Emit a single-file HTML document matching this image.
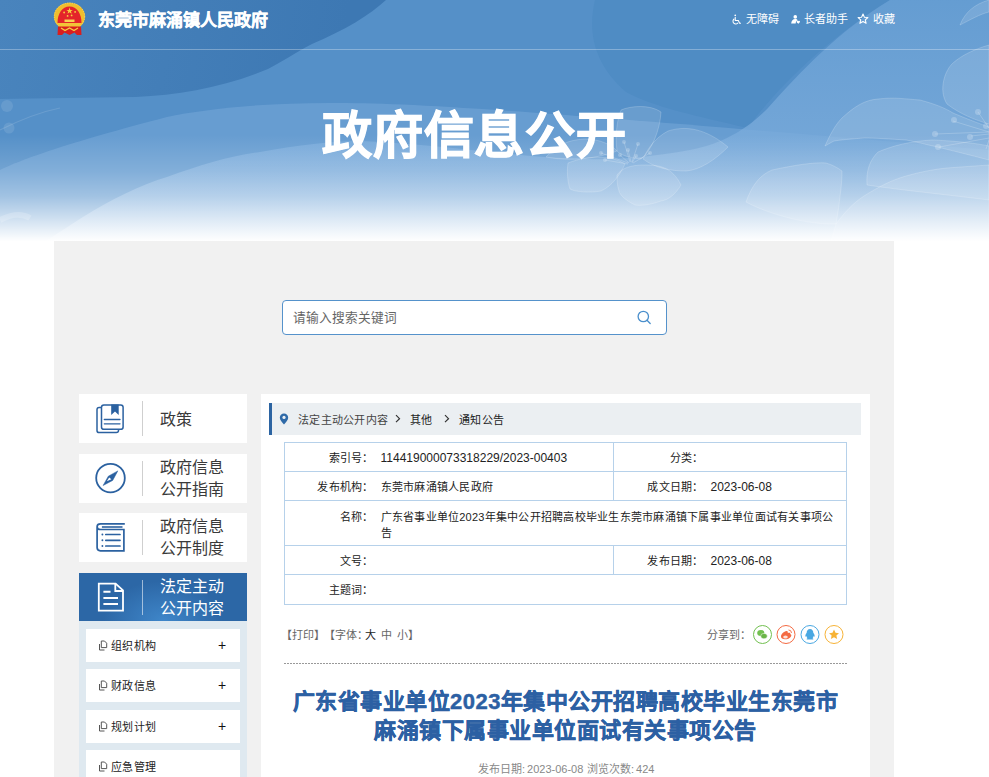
<!DOCTYPE html>
<html lang="zh-CN"><head><meta charset="utf-8">
<style>
*{margin:0;padding:0;box-sizing:border-box}
html,body{width:989px;height:777px;overflow:hidden;background:#fff;font-family:"Liberation Sans",sans-serif}
.abs{position:absolute}
#hdr{position:absolute;left:0;top:0;width:989px;height:245px;overflow:hidden;
 background:linear-gradient(to bottom,#4a84be 0px,#4c87c0 90px,#6c9fd2 140px,#a9c8e7 180px,#e6eff9 220px,#ffffff 243px)}
#topline{position:absolute;left:0;top:49px;width:989px;height:1px;background:rgba(255,255,255,0.28)}
.sitename{position:absolute;left:98px;top:10px;font-size:17px;font-weight:bold;color:#fff;-webkit-text-stroke:0.35px #fff;line-height:22px;white-space:nowrap}
.toplinks{position:absolute;top:11px;font-size:11px;color:#fff;line-height:16px;white-space:nowrap}
.bigtitle{position:absolute;left:0;width:948px;top:101px;text-align:center;font-size:50px;letter-spacing:0.7px;text-indent:0.7px;font-weight:bold;color:#fff;-webkit-text-stroke:1.1px #fff;line-height:70px;white-space:nowrap}
#main{position:absolute;left:54px;top:241px;width:840px;height:600px;background:#f1f1f1}
#search{position:absolute;left:282px;top:300px;width:385px;height:35px;background:#fff;border:1px solid #5592cb;border-radius:4px}
#search span{position:absolute;left:10px;top:8px;font-size:12.7px;color:#666;line-height:18px}
.side{position:absolute;left:79px;width:168px;height:49px;background:#fff}
.side .div{position:absolute;left:63px;top:7px;width:1px;height:35px;background:#cfcfcf}
.side .t{position:absolute;left:81px;font-size:16px;color:#3a3a3a;line-height:22px;white-space:nowrap}
.side svg{position:absolute;left:16px;top:9px}
#active{background:radial-gradient(ellipse 60px 40px at 50% 100%,#3f86c9 0%,#2c67a6 100%)}
#active .t{color:#fff}
#active .div{background:rgba(255,255,255,0.55)}
#sub{position:absolute;left:79px;top:621px;width:168px;height:200px;background:#dfe9f0}
.si{position:absolute;left:7px;width:154px;height:33px;background:#fff}
.si .t{position:absolute;left:25px;top:9px;font-size:11px;letter-spacing:0.4px;color:#222;line-height:16px;white-space:nowrap}
.si .p{position:absolute;left:132px;top:6px;font-size:14px;color:#111;line-height:20px}
.si svg{position:absolute;left:13px;top:11px}
#panel{position:absolute;left:261px;top:394px;width:609px;height:400px;background:#fff}
#crumb{position:absolute;left:269px;top:403px;width:592px;height:32px;background:#ebeff2;border-left:3px solid #2c64a2;font-size:12px;color:#333;line-height:32px;white-space:nowrap}
table{position:absolute;left:284px;top:442px;border-collapse:collapse;font-size:12px;color:#222}
td{border-top:1px solid #b6d1ea;border-bottom:1px solid #b6d1ea;padding:0;line-height:16px;font-size:11px;letter-spacing:0.25px}
.n{font-size:12px;letter-spacing:0}
td.l{border-left:1px solid #b6d1ea}
td.e{border-right:1px solid #b6d1ea}
td.l{text-align:right;padding-right:0;padding-top:1px}
td.v{padding-left:7px;padding-top:1px}
.tools{position:absolute;top:627px;font-size:11px;color:#666;line-height:16px;white-space:nowrap}
#dots{position:absolute;left:284px;top:663px;width:563px;height:1px;background:repeating-linear-gradient(to right,#999 0,#999 2px,transparent 2px,transparent 3px)}
.atitle{position:absolute;left:284px;width:563px;top:687px;text-align:center;font-size:22px;letter-spacing:0.5px;font-weight:bold;color:#2c60a3;-webkit-text-stroke:0.45px #2c60a3;line-height:29px}
.meta{position:absolute;left:284px;width:563px;top:761px;text-align:center;font-size:11px;color:#888;line-height:16px;white-space:nowrap}
</style></head><body>
<div id="hdr">
<svg width="989" height="245" viewBox="0 0 989 245" style="position:absolute;left:0;top:0">
<defs>
<linearGradient id="fade" x1="0" y1="0" x2="0" y2="245" gradientUnits="userSpaceOnUse">
<stop offset="0" stop-color="#fff" stop-opacity="0"/>
<stop offset="0.55" stop-color="#fff" stop-opacity="0"/>
<stop offset="0.70" stop-color="#fff" stop-opacity="0.18"/>
<stop offset="0.80" stop-color="#fff" stop-opacity="0.38"/>
<stop offset="0.88" stop-color="#fff" stop-opacity="0.64"/>
<stop offset="0.95" stop-color="#fff" stop-opacity="0.88"/>
<stop offset="0.985" stop-color="#fff" stop-opacity="1"/>
</linearGradient>
<linearGradient id="lt" x1="0" y1="0" x2="0" y2="245" gradientUnits="userSpaceOnUse">
<stop offset="0" stop-color="#6aa1d5"/>
<stop offset="0.6" stop-color="#7eaedd"/>
<stop offset="1" stop-color="#a8c8e8"/>
</linearGradient>
<linearGradient id="dk" x1="0" y1="0" x2="340" y2="60" gradientUnits="userSpaceOnUse">
<stop offset="0" stop-color="#4984bd"/>
<stop offset="1" stop-color="#3d78b3"/>
</linearGradient>
</defs>
<rect x="0" y="0" width="989" height="245" fill="#5590c8"/>
<path d="M0,0 H386 C370,15 345,30 312,44 C295,53 283,61 268,69 C225,87 180,95 136,97 L0,99 Z" fill="url(#dk)"/>
<path d="M595,0 C588,30 592,62 626,92 C650,106 700,117 748,128 C775,90 825,40 890,0 Z" fill="#4f8cc4"/>
<path d="M0,170 C20,160 67,143 167,117 C210,108 267,103 330,103 C420,103 520,110 989,150 V245 H0 Z" fill="#6da1d4" opacity="0.75"/>
<path d="M40,245 C60,232 70,225 83,217 C110,200 140,185 167,177 C200,165 230,156 260,152 C300,145 330,141 360,141 C450,145 520,158 586,159 C620,160 650,157 690,150 C725,143 748,128 768,108 C800,72 840,30 890,0 H989 V245 Z" fill="url(#lt)" opacity="0.75"/>
<g fill="#fff" fill-opacity="0.12" stroke="#fff" stroke-opacity="0.18" stroke-width="1">
<path d="M546,157 C555,147 565,140 585,139 C600,139 612,145 617,151 C600,158 570,162 546,157 Z"/>
<path d="M621,110 C630,106 650,104 661,112 C660,130 652,150 641,159 C630,158 620,155 617,151 C615,135 617,120 621,110 Z"/>
<path d="M643,159 C648,148 655,138 668,131 C690,124 710,132 728,147 C715,160 700,170 686,171 C670,171 655,168 643,159 Z"/>
<path d="M568,163 C580,158 595,156 610,158 C618,160 622,162 625,164 C620,175 612,186 601,191 C590,193 575,192 570,189 C567,180 567,170 568,163 Z"/>
<path d="M617,175 C622,168 630,165 645,165 C660,165 672,167 681,185 C675,195 668,200 661,201 C650,205 640,206 635,205 C625,200 620,195 619,191 C617,185 617,180 617,175 Z"/>
<path d="M960,25 C965,12 975,4 989,0 V12 C980,14 970,20 960,25 Z"/>
<path d="M947,104 C938,90 945,70 953,63 C962,55 975,49 989,45 V124 C975,120 960,114 947,104 Z"/>
<path d="M867,185 C866,170 870,160 878,152 C892,146 910,141 933,140 C955,141 975,143 989,146 V200 C950,195 900,190 867,185 Z"/>
<path d="M825,146 C830,135 835,125 842,118 C855,106 865,100 878,99 C895,97 905,99 920,100 C935,104 945,108 953,113 C965,118 975,122 989,127 V160 C970,155 950,150 933,146 C920,143 912,141 906,140 C890,139 875,138 864,138 C850,139 840,140 834,141 C830,143 827,145 825,146 Z"/>
<path d="M836,224 C845,212 852,204 864,196 C880,186 892,180 906,176 C920,172 935,169 947,168 C960,167 975,166 989,165 V245 H830 Z"/>
<path d="M746,202 C752,185 760,175 772,170 C795,165 815,162 826,163 C833,165 838,168 842,171 C842,185 840,195 839,205 C838,212 837,218 836,224 C810,225 770,215 746,202 Z"/>
</g>
<g fill="#fff" fill-opacity="0.22">
<circle cx="624" cy="142" r="2"/><circle cx="638" cy="144" r="2"/><circle cx="628" cy="150" r="2"/><circle cx="601" cy="153" r="2"/><circle cx="605" cy="160" r="2"/><circle cx="620" cy="155" r="2"/><circle cx="636" cy="156" r="2"/><circle cx="650" cy="153" r="2"/>
<circle cx="935" cy="134" r="3"/><circle cx="938" cy="147" r="3"/><circle cx="954" cy="120" r="3"/><circle cx="970" cy="137" r="3"/><circle cx="978" cy="112" r="3"/><circle cx="986" cy="126" r="3"/>
</g>
<g fill="#fff" fill-opacity="0.1"><circle cx="7" cy="106" r="6"/><circle cx="9" cy="128" r="5.5"/></g>
<path d="M0,130 C20,120 40,112 60,108" fill="none" stroke="#fff" stroke-opacity="0.12" stroke-width="1.2"/>
<path d="M0,220 C10,215 20,212 30,218" fill="none" stroke="#fff" stroke-opacity="0.2" stroke-width="6"/>
<g stroke="#fff" stroke-opacity="0.2" stroke-width="1" fill="none">
<path d="M935,134 L989,132 M939,147 L989,138 M953,121 L989,132 M971,136 L989,134 M978,112 L989,128 M986,149 L989,140"/>
<path d="M624,142 L630,162 M638,144 L632,162 M628,150 L631,162 M601,153 L628,163 M605,160 L628,164 M620,155 L629,163 M636,156 L632,163 M650,153 L633,163"/>
</g>
<rect x="0" y="0" width="989" height="245" fill="url(#fade)"/>
<rect x="0" y="49" width="989" height="1" fill="#fff" fill-opacity="0.3"/>
</svg>
</div>
<svg class="abs" style="left:50px;top:0px" width="40" height="40" viewBox="0 0 40 40">
<ellipse cx="19.5" cy="16.5" rx="15.5" ry="13.8" fill="#f0be2e"/>
<ellipse cx="19.5" cy="16.5" rx="15.2" ry="13.5" fill="none" stroke="#f8d860" stroke-width="1" stroke-dasharray="1.2 1.2"/>
<path d="M7.5,23 C7.5,14 12,6.6 19.5,6.6 C27,6.6 31.5,14 31.5,23 Z" fill="#e4242a"/>
<path d="M19.5,7.6 l0.9,2.3 h2.4 l-1.9,1.4 0.8,2.4 -2.2,-1.5 -2,1.5 0.8,-2.4 -1.9,-1.4 h2.4 z" fill="#f6d040"/>
<circle cx="14.1" cy="12.5" r="0.9" fill="#f6d040"/><circle cx="17.6" cy="15.9" r="0.9" fill="#f6d040"/><circle cx="21.6" cy="15.4" r="0.9" fill="#f6d040"/><circle cx="25.1" cy="11.9" r="0.9" fill="#f6d040"/>
<rect x="14.5" y="19.5" width="10" height="2.5" fill="#f8d050"/>
<path d="M7.5,23 H31.5 L30,26.5 H9 Z" fill="#f2c438"/>
<path d="M8,26.5 H31 L31.5,35 H27 L24.5,32.5 L19.5,35 L14.5,32.5 L12,35 H7.5 Z" fill="#d91e1e"/>
<path d="M11,28 L15,30.5 L19.5,28 L24,30.5 L28,28" fill="none" stroke="#f6d040" stroke-width="1.4"/>
</svg>
<svg class="abs" style="left:732px;top:14px" width="10" height="10.5" viewBox="0 0 11 12" fill="none" stroke="#fff" stroke-width="1.2">
<circle cx="3.5" cy="1.5" r="1" fill="#fff" stroke="none"/>
<path d="M3.5,3.5 V7.5 H7 L8.5,10.5 H10"/>
<path d="M2.5,5.5 A3.2,3.2 0 1 0 6.8,10"/>
</svg><svg class="abs" style="left:790px;top:15px" width="10.5" height="9" viewBox="0 0 12 11" fill="#fff">
<circle cx="6" cy="2.3" r="2.2"/>
<path d="M1,10.5 C1.5,7 3,5 6,5 C7.5,5 8.5,5.5 9,6.5 L7,7.5 L6.5,10.5 Z"/>
<path d="M7.5,8 C8,6.8 9.2,6.8 9.8,7.6 C10.4,6.8 11.6,6.8 11.8,8 C11.9,9 10.5,10 9.8,10.7 C9,10 7.4,9 7.5,8 Z"/>
</svg><svg class="abs" style="left:857px;top:13px" width="12" height="12" viewBox="0 0 12 12" fill="none" stroke="#fff" stroke-width="1.1" stroke-linejoin="round">
<path d="M6,1 L7.4,4.2 L10.9,4.5 L8.3,6.8 L9.1,10.3 L6,8.5 L2.9,10.3 L3.7,6.8 L1.1,4.5 L4.6,4.2 Z"/>
</svg>
<div class="sitename">东莞市麻涌镇人民政府</div>
<div class="toplinks" style="left:746px">无障碍</div>
<div class="toplinks" style="left:804px">长者助手</div>
<div class="toplinks" style="left:873px">收藏</div>
<div class="bigtitle">政府信息公开</div>

<div id="main"></div>
<div id="search"><span>请输入搜索关键词</span></div>
<svg class="abs" style="left:635px;top:308px" width="18" height="18" viewBox="0 0 18 18" fill="none" stroke="#4a8fcc" stroke-width="1.3">
<circle cx="8.3" cy="8.5" r="5.2"/><path d="M12,12.3 L15.2,15.5" stroke-linecap="round"/>
</svg>

<div class="side" style="top:394px"><div class="div"></div><div class="t" style="top:15px">政策</div></div>
<div class="side" style="top:454px"><div class="div"></div><div class="t" style="top:3px">政府信息<br>公开指南</div></div>
<div class="side" style="top:513px"><div class="div"></div><div class="t" style="top:3px">政府信息<br>公开制度</div></div>
<div class="side" id="active" style="top:573px;height:48px"><div class="div"></div><div class="t" style="top:3px">法定主动<br>公开内容</div></div>
<svg class="abs" style="left:90px;top:400px" width="40" height="40" viewBox="0 0 40 40" fill="none" stroke="#2b61a0">
<path d="M11,7.4 H9.2 Q7,7.4 7,9.6 V30.4 Q7,32.6 9.2,32.6 H26.3 Q28.5,32.6 28.6,30" stroke-width="1.5"/>
<rect x="11.5" y="4.9" width="21.6" height="24.4" rx="2.4" stroke-width="1.5"/>
<path d="M21.2,4.6 H28.7 V15 L25,11.6 L21.2,15 Z" fill="#2b61a0" stroke="none"/>
<path d="M14.3,19.5 H30 M14.3,23.8 H30" stroke-width="1.3" stroke-linecap="round"/>
</svg><svg class="abs" style="left:90px;top:458px" width="40" height="40" viewBox="0 0 40 40" fill="none" stroke="#2b61a0">
<circle cx="20.5" cy="20.1" r="14.3" stroke-width="1.8"/>
<path d="M27.8,12.9 L22.7,22.4 L13.1,27.5 L18.3,18.2 Z" fill="#2b61a0" stroke="#2b61a0" stroke-width="0.5" stroke-linejoin="round"/>
<path d="M19.2,19.5 L21.4,21.3 L16.8,23.3 Z" fill="#fff" stroke="none"/>
</svg><svg class="abs" style="left:90px;top:517px" width="40" height="40" viewBox="0 0 40 40" fill="none" stroke="#2b61a0">
<path d="M34.8,6.8 H10.6 Q7.1,6.8 7.1,9.7 Q7.1,12.5 10.6,12.5 H33.9 V33.8 H10.4 Q7.1,33.8 7.1,30.6 V9.7" stroke-width="1.7"/>
<path d="M11.9,10 H32.5" stroke-width="1.6"/>
<path d="M15.8,17.5 H30 M15.8,23.3 H30 M15.8,29 H30" stroke-width="1.7" stroke-linecap="round"/>
<path d="M12.4,17.5 h0.01 M12.4,23.3 h0.01 M12.4,29 h0.01" stroke-width="1.9" stroke-linecap="round"/>
</svg>
<div id="sub">
  <div class="si" style="top:8px"><svg style="position:absolute;left:12px;top:11px" width="10" height="12" viewBox="0 0 10 12" fill="none" stroke="#555" stroke-width="1"><path d="M1.5,4 V10 H6.5"/><path d="M3.3,1 H6.5 L8.7,3.2 V7.6 H3.3 Z"/></svg><div class="t">组织机构</div><div class="p">+</div></div>
  <div class="si" style="top:48px"><svg style="position:absolute;left:12px;top:11px" width="10" height="12" viewBox="0 0 10 12" fill="none" stroke="#555" stroke-width="1"><path d="M1.5,4 V10 H6.5"/><path d="M3.3,1 H6.5 L8.7,3.2 V7.6 H3.3 Z"/></svg><div class="t">财政信息</div><div class="p">+</div></div>
  <div class="si" style="top:89px"><svg style="position:absolute;left:12px;top:11px" width="10" height="12" viewBox="0 0 10 12" fill="none" stroke="#555" stroke-width="1"><path d="M1.5,4 V10 H6.5"/><path d="M3.3,1 H6.5 L8.7,3.2 V7.6 H3.3 Z"/></svg><div class="t">规划计划</div><div class="p">+</div></div>
  <div class="si" style="top:129px"><svg style="position:absolute;left:12px;top:11px" width="10" height="12" viewBox="0 0 10 12" fill="none" stroke="#555" stroke-width="1"><path d="M1.5,4 V10 H6.5"/><path d="M3.3,1 H6.5 L8.7,3.2 V7.6 H3.3 Z"/></svg><div class="t">应急管理</div></div>
</div>

<svg class="abs" style="left:90px;top:577px" width="40" height="40" viewBox="0 0 40 40" fill="none" stroke="#fff">
<path d="M8.8,6.6 H25.6 L33,13.4 V33.6 H8.8 Z" stroke-width="1.8" stroke-linejoin="miter"/>
<path d="M25.3,6.6 V14 H33" stroke-width="1.8"/>
<path d="M13.4,14.7 H20.5 M13.4,21 H28 M13.4,27 H28" stroke-width="2"/>
</svg>
<div id="panel"></div>
<div id="crumb"></div>
<svg class="abs" style="left:279px;top:413px" width="10" height="12" viewBox="0 0 10 12">
<path d="M5,0.6 C7.4,0.6 9.2,2.4 9.2,4.7 C9.2,7.2 6.6,9.6 5,11.4 C3.4,9.6 0.8,7.2 0.8,4.7 C0.8,2.4 2.6,0.6 5,0.6 Z" fill="#2f6aa8"/>
<circle cx="5" cy="4.4" r="1.6" fill="#ebeff2"/>
</svg>
<svg class="abs" style="left:394px;top:414px" width="8" height="10" viewBox="0 0 8 10" fill="none" stroke="#333" stroke-width="1.2"><path d="M2,1.2 L5.5,4.7 L2,8.2"/></svg>
<svg class="abs" style="left:443px;top:414px" width="8" height="10" viewBox="0 0 8 10" fill="none" stroke="#333" stroke-width="1.2"><path d="M2,1.2 L5.5,4.7 L2,8.2"/></svg>
<div class="abs" style="left:298px;top:412px;font-size:11px;letter-spacing:0.25px;color:#444;line-height:16px;white-space:nowrap">法定主动公开内容</div>
<div class="abs" style="left:410px;top:412px;font-size:11px;letter-spacing:0.25px;color:#222;line-height:16px;white-space:nowrap">其他</div>
<div class="abs" style="left:459px;top:412px;font-size:11px;letter-spacing:0.25px;color:#222;line-height:16px;white-space:nowrap">通知公告</div>
<table>
<tr style="height:29px"><td class="l" style="width:89px">索引号：</td><td class="v e" style="width:240px"><span class="n">114419000073318229/2023-00403</span></td><td class="l" style="width:90px">分类：</td><td class="v e" style="width:143px"></td></tr>
<tr style="height:29px"><td class="l">发布机构：</td><td class="v e">东莞市麻涌镇人民政府</td><td class="l">成文日期：</td><td class="v e"><span class="n">2023-06-08</span></td></tr>
<tr style="height:45px"><td class="l" style="vertical-align:top;padding-top:8px">名称：</td><td class="v e" colspan="3" style="padding-top:8px;padding-right:12px;vertical-align:top">广东省事业单位2023年集中公开招聘高校毕业生东莞市麻涌镇下属事业单位面试有关事项公告</td></tr>
<tr style="height:29px"><td class="l">文号：</td><td class="v e"></td><td class="l">发布日期：</td><td class="v e"><span class="n">2023-06-08</span></td></tr>
<tr style="height:30px"><td class="l">主题词：</td><td class="v e" colspan="3"></td></tr>
</table>
<div class="tools" style="left:281px">【打印】</div><div class="tools" style="left:324px">【字体：</div><div class="tools" style="left:365px;color:#222">大</div><div class="tools" style="left:381px">中</div><div class="tools" style="left:397px">小】</div>
<div class="tools" style="left:707px">分享到：</div>
<svg class="abs" style="left:750px;top:622px" width="96" height="26" viewBox="0 0 96 26">
<circle cx="12.5" cy="12.5" r="9" fill="none" stroke="#72c050" stroke-width="1"/>
<ellipse cx="10.8" cy="11" rx="3.6" ry="3" fill="#72c050"/>
<ellipse cx="14" cy="14.1" rx="3.3" ry="2.7" fill="#6ab448" stroke="#fff" stroke-width="0.5"/>
<circle cx="36" cy="12.5" r="9" fill="none" stroke="#f46a42" stroke-width="1"/>
<path d="M31,14.5 C31,12 34,9.3 36.5,9 C38,8.9 38,10 37.7,11 C39.5,10.3 40.6,10.8 40.2,12 C41.5,12.4 41.6,13.5 41,14.5 C40,16.5 37,17.3 35,17.3 C32.5,17.3 31,16.3 31,14.5 Z" fill="#f46a42"/>
<ellipse cx="35.5" cy="15" rx="2.3" ry="1.6" fill="#fff" fill-opacity="0.8"/>
<path d="M38.5,8 A3,3 0 0 1 41.5,11" fill="none" stroke="#f46a42" stroke-width="0.9"/>
<circle cx="60" cy="12.5" r="9" fill="none" stroke="#4aa8e2" stroke-width="1"/>
<path d="M60,7 C62.2,7 63.3,8.8 63.3,10.8 C64.3,12 65,13.5 64.5,14.8 C64,14.6 63.8,14.3 63.6,14 C63.5,15 63,15.8 62.5,16.3 C63.2,16.6 63.6,17 63.2,17.4 H56.8 C56.4,17 56.8,16.6 57.5,16.3 C57,15.8 56.5,15 56.4,14 C56.2,14.3 56,14.6 55.5,14.8 C55,13.5 55.7,12 56.7,10.8 C56.7,8.8 57.8,7 60,7 Z" fill="#4aa8e2"/>
<circle cx="84" cy="12.5" r="9" fill="none" stroke="#f7b336" stroke-width="1"/>
<path d="M84,7.6 L85.5,10.8 L89,11.2 L86.4,13.5 L87.1,17 L84,15.2 L80.9,17 L81.6,13.5 L79,11.2 L82.5,10.8 Z" fill="#f7b336"/>
</svg>
<div id="dots"></div>
<div class="atitle">广东省事业单位2023年集中公开招聘高校毕业生东莞市<br>麻涌镇下属事业单位面试有关事项公告</div>
<div class="meta" style="left:478px;width:auto">发布日期:<span style="margin-left:2px">2023-06-08</span></div><div class="meta" style="left:587px;width:auto">浏览次数:<span style="margin-left:2px">424</span></div>
</body></html>
